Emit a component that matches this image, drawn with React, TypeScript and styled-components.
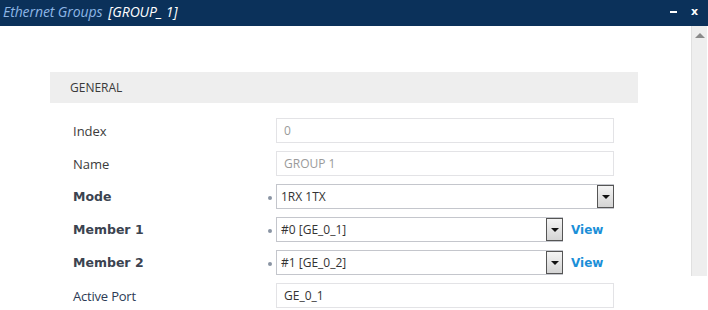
import React from "react";
import styled, { createGlobalStyle } from "styled-components";

const Global = createGlobalStyle`
  html, body { margin: 0; padding: 0; background: #ffffff; }
  body { width: 708px; height: 310px; overflow: hidden; font-family: "Open Sans", "DejaVu Sans", sans-serif; }
`;

const Window = styled.div`
  width: 708px;
  height: 310px;
  display: flex;
  flex-direction: column;
  background: #fff;
`;

const TitleBar = styled.div`
  height: 26px;
  flex: none;
  background: #0b315a;
  display: flex;
  align-items: center;
  justify-content: space-between;
  padding: 0 10px 0 3px;
`;

const Title = styled.div`
  font-family: "Open Sans", "DejaVu Sans", sans-serif;
  font-style: italic;
  font-size: 14px;
  color: #8db6e6;
  white-space: nowrap;
  margin-top: -4px;
  letter-spacing: -0.1px;
`;

const TitleName = styled.span`
  color: #ffffff;
  margin-left: 6px;
`;

const Controls = styled.div`
  display: flex;
  align-items: center;
  gap: 14px;
  margin-top: -3px;
`;

const Minimize = styled.span`
  display: block;
  width: 7px;
  height: 2px;
  background: #fff;
`;

const Close = styled.span`
  color: #fff;
  font-family: "DejaVu Sans", sans-serif;
  font-weight: bold;
  font-size: 11px;
  line-height: 1;
`;

const Body = styled.div`
  flex: 1;
  display: flex;
  min-height: 0;
`;

const Content = styled.div`
  flex: 1;
  padding: 46px 0 0 50px;
`;

const ScrollTrack = styled.div`
  width: 16px;
  flex: none;
  height: 250px;
  margin-right: 1px;
  background: #eeeeee;
  border-left: 1px solid #e0e0e0;
  display: flex;
  justify-content: center;
  padding-top: 7px;
  box-sizing: border-box;
`;

const SectionHeader = styled.div`
  width: 588px;
  height: 31px;
  background: #eeeeee;
  display: flex;
  align-items: center;
  padding-left: 20px;
  box-sizing: border-box;
  font-size: 12px;
  color: #3a3a3a;
  letter-spacing: 0;
`;

const Form = styled.div`
  display: flex;
  flex-direction: column;
  gap: 8px;
  padding-top: 15px;
`;

const Row = styled.div`
  display: grid;
  grid-template-columns: 193px 10px auto;
  align-items: center;
  height: 25px;
  padding-left: 23px;
`;

const Label = styled.div<{ $bold?: boolean; $alt?: boolean }>`
  font-size: ${(p) => (p.$bold ? "12.5px" : "13px")};
  font-weight: ${(p) => (p.$bold ? 700 : 400)};
  color: ${(p) => (p.$alt ? "#2d3b55" : p.$bold ? "#3b4350" : "#3c3c3c")};
  letter-spacing: ${(p) => (p.$alt ? "-0.2px" : "0")};
  font-family: ${(p) => (p.$bold ? "'DejaVu Sans', sans-serif" : "'Open Sans', sans-serif")};
  white-space: nowrap;
`;

const BulletCell = styled.div`
  display: flex;
  justify-content: flex-end;
  padding-right: 4px;
`;

const Dot = styled.span`
  width: 4px;
  height: 4px;
  border-radius: 50%;
  background: #8a94a3;
  margin-top: 2px;
`;

const Field = styled.div`
  display: flex;
  align-items: center;
  gap: 8px;
`;

const TextBox = styled.div<{ $muted?: boolean }>`
  width: 338px;
  height: 25px;
  box-sizing: border-box;
  border: 1px solid #e3e3e6;
  display: flex;
  align-items: center;
  padding-left: 7px;
  font-size: 12px;
  color: ${(p) => (p.$muted ? "#9a9a9a" : "#333")};
`;

const SelectBox = styled.div<{ $short?: boolean }>`
  width: ${(p) => (p.$short ? "287px" : "338px")};
  height: 25px;
  box-sizing: border-box;
  border: 1px solid #c4c6cc;
  display: flex;
  align-items: center;
  justify-content: space-between;
  font-size: 12px;
  color: #333;
  padding-left: 4px;
`;

const ArrowBtn = styled.div`
  width: 17px;
  height: 23px;
  box-sizing: border-box;
  border: 1px solid #555;
  background: linear-gradient(#f4f4f4, #d4d4d4);
  display: flex;
  align-items: center;
  justify-content: center;
  margin-right: -1px;
`;

const Tri = styled.span`
  width: 0;
  height: 0;
  border-left: 4px solid transparent;
  border-right: 4px solid transparent;
  border-top: 4px solid #111;
`;

const ViewLink = styled.a`
  font-family: "DejaVu Sans", sans-serif;
  font-weight: 700;
  font-size: 12px;
  color: #1b8fd8;
  text-decoration: none;
`;

const ScrollArrow = styled.span`
  width: 0;
  height: 0;
  border-left: 5px solid transparent;
  border-right: 5px solid transparent;
  border-bottom: 5px solid #8a8a8a;
`;

export default function App() {
  return (
    <>
      <Global />
      <Window>
        <TitleBar>
          <Title>
            Ethernet Groups<TitleName>[GROUP_ 1]</TitleName>
          </Title>
          <Controls>
            <Minimize />
            <Close>x</Close>
          </Controls>
        </TitleBar>
        <Body>
          <Content>
            <SectionHeader>GENERAL</SectionHeader>
            <Form>
              <Row>
                <Label>Index</Label>
                <BulletCell />
                <Field><TextBox $muted>0</TextBox></Field>
              </Row>
              <Row>
                <Label>Name</Label>
                <BulletCell />
                <Field><TextBox $muted>GROUP 1</TextBox></Field>
              </Row>
              <Row>
                <Label $bold>Mode</Label>
                <BulletCell><Dot /></BulletCell>
                <Field>
                  <SelectBox>
                    1RX 1TX
                    <ArrowBtn><Tri /></ArrowBtn>
                  </SelectBox>
                </Field>
              </Row>
              <Row>
                <Label $bold>Member 1</Label>
                <BulletCell><Dot /></BulletCell>
                <Field>
                  <SelectBox $short>
                    #0 [GE_0_1]
                    <ArrowBtn><Tri /></ArrowBtn>
                  </SelectBox>
                  <ViewLink>View</ViewLink>
                </Field>
              </Row>
              <Row>
                <Label $bold>Member 2</Label>
                <BulletCell><Dot /></BulletCell>
                <Field>
                  <SelectBox $short>
                    #1 [GE_0_2]
                    <ArrowBtn><Tri /></ArrowBtn>
                  </SelectBox>
                  <ViewLink>View</ViewLink>
                </Field>
              </Row>
              <Row>
                <Label $alt>Active Port</Label>
                <BulletCell />
                <Field><TextBox>GE_0_1</TextBox></Field>
              </Row>
            </Form>
          </Content>
          <ScrollTrack>
            <ScrollArrow />
          </ScrollTrack>
        </Body>
      </Window>
    </>
  );
}
